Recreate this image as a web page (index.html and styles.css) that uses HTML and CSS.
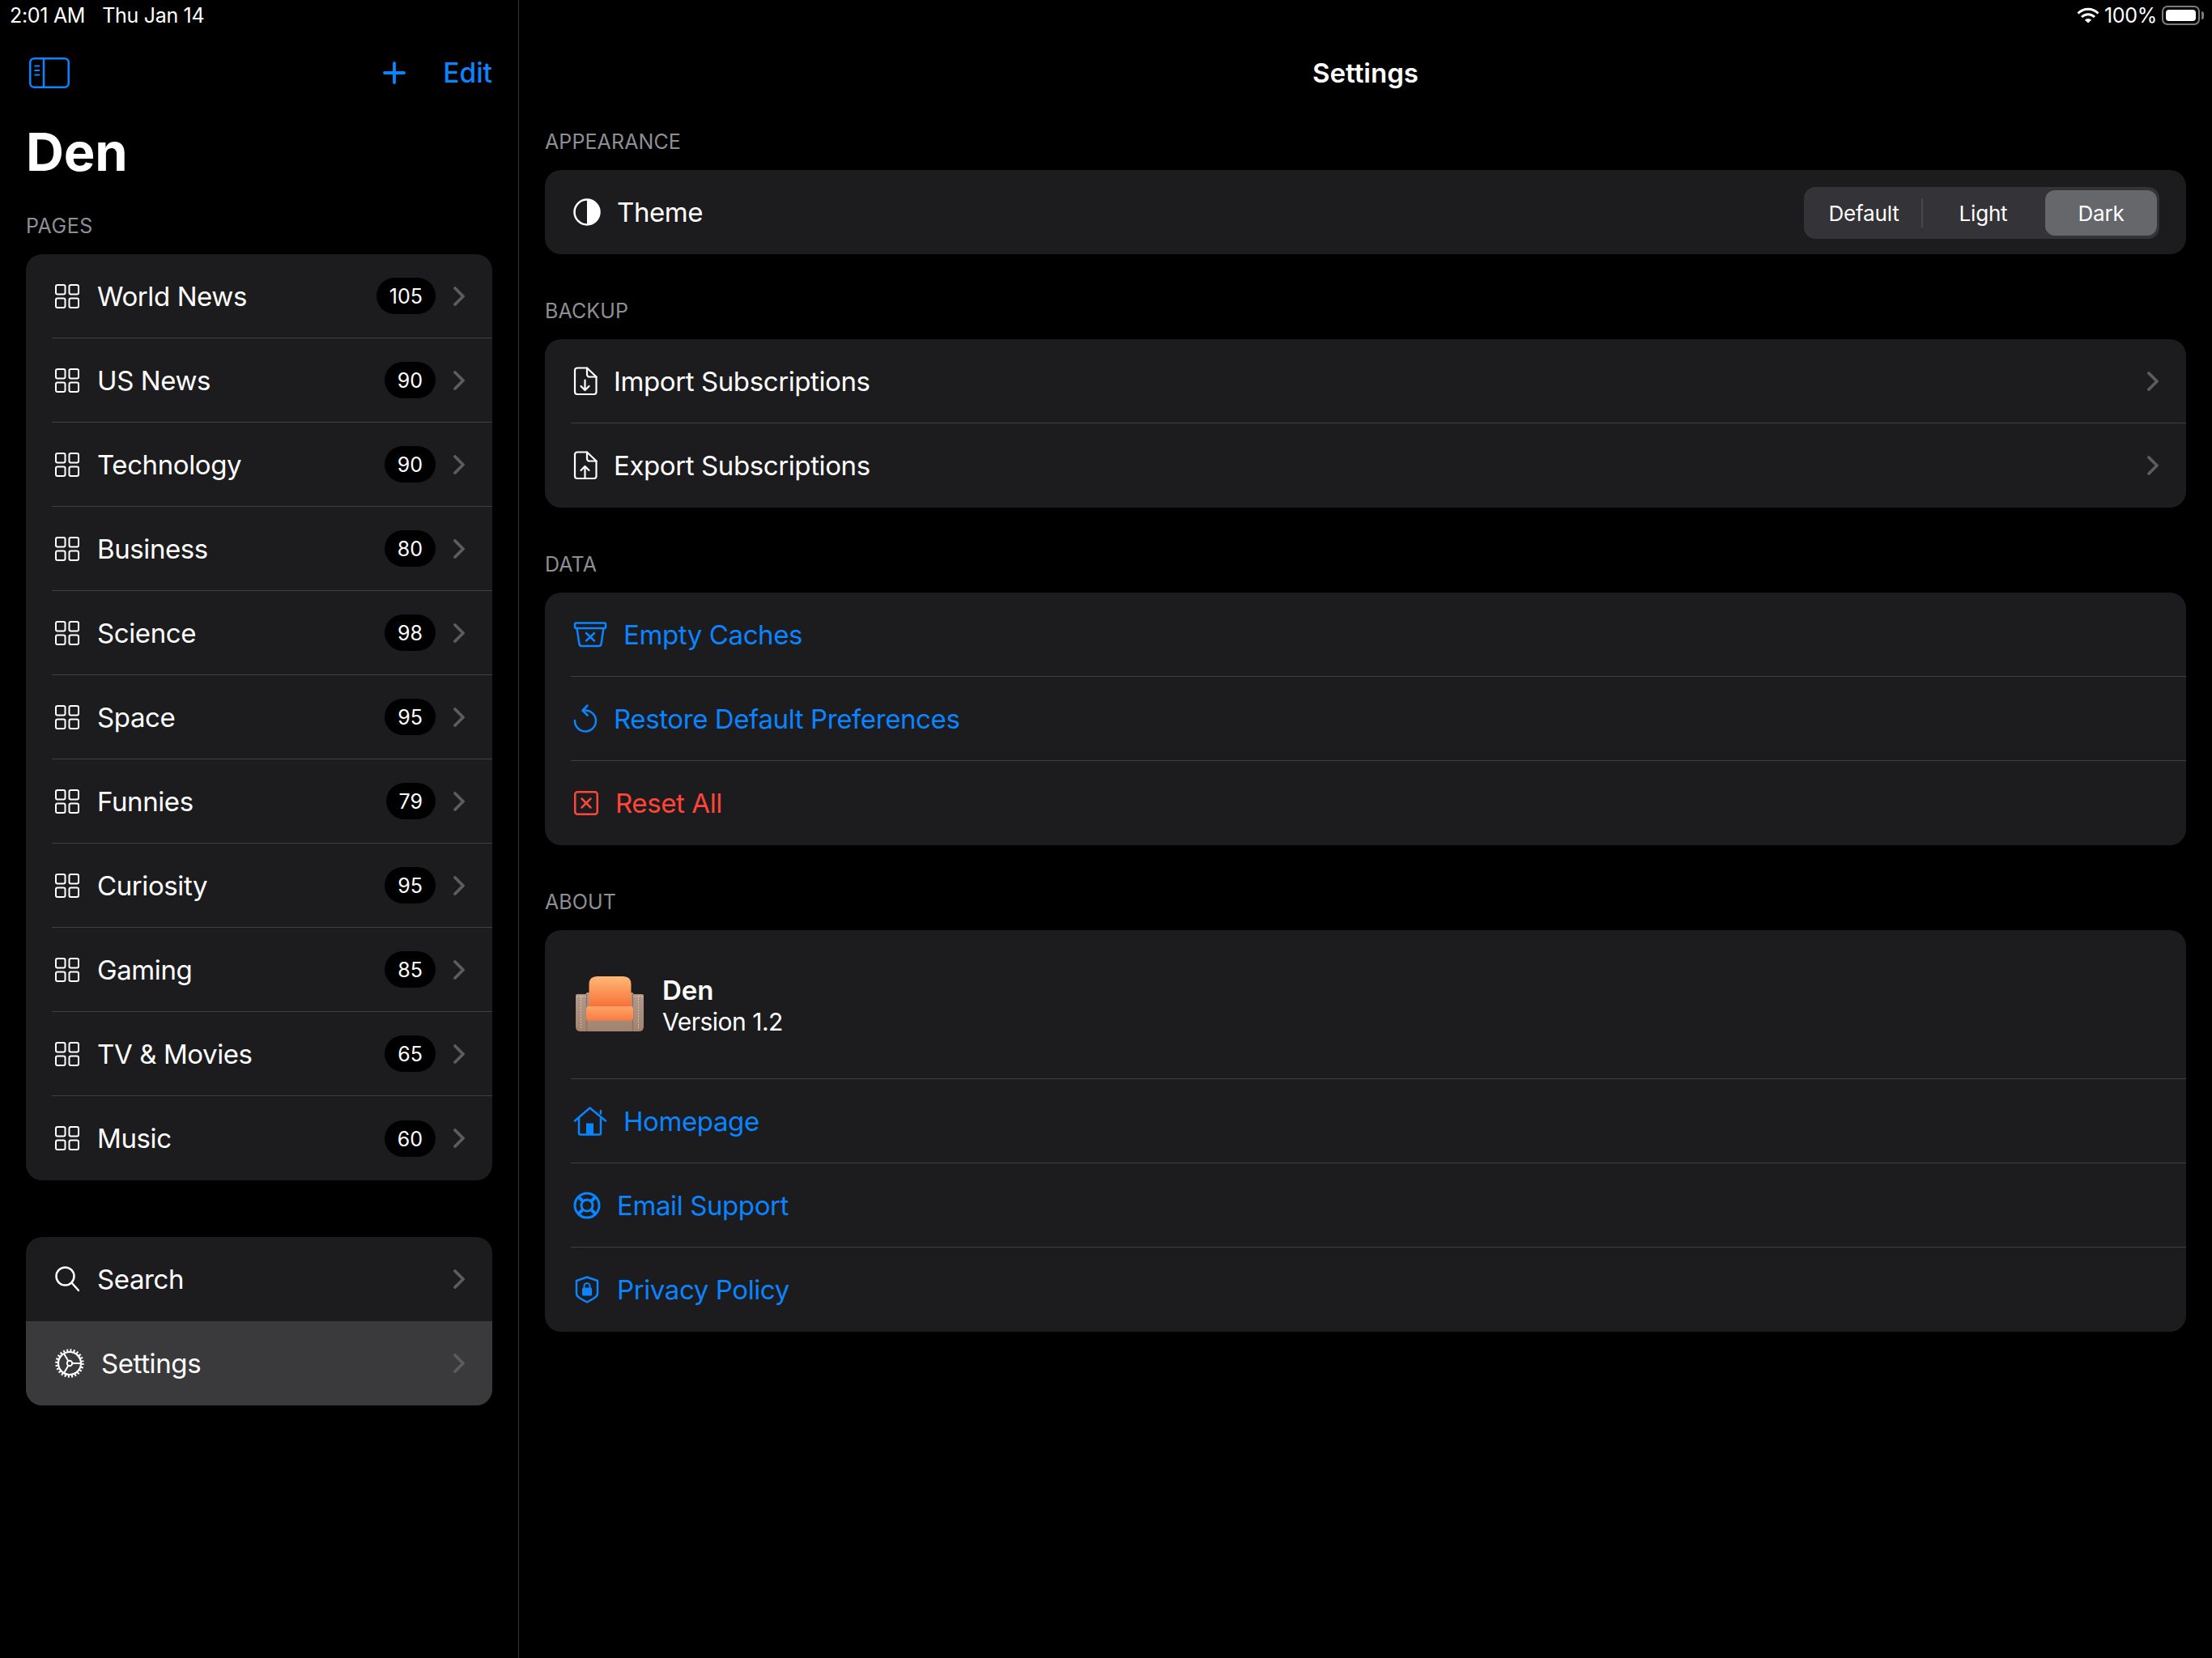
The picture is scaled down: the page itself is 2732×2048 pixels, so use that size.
FILE: index.html
```html
<!DOCTYPE html>
<html lang="en">
<head>
    <meta charset="UTF-8">
    <title>Den Settings</title>
    <link rel="stylesheet" href="styles.css">
</head>
<body>

    <!-- Shared icons -->
    <svg class="icon-defs" width="0" height="0">
        <symbol id="grid" viewBox="0 0 30 30">
            <g fill="none" stroke="currentColor" stroke-width="2">
                <rect x="1" y="1" width="11.5" height="11.5" rx="2"/>
                <rect x="17.5" y="1" width="11.5" height="11.5" rx="2"/>
                <rect x="1" y="17.5" width="11.5" height="11.5" rx="2"/>
                <rect x="17.5" y="17.5" width="11.5" height="11.5" rx="2"/>
            </g>
        </symbol>
        <symbol id="chevron" viewBox="0 0 14 24">
            <path d="M2 2l10 10L2 22" fill="none" stroke="currentColor" stroke-width="3.800" stroke-linecap="round" stroke-linejoin="round"/>
        </symbol>
    </svg>

    <div class="app">
        <aside class="sidebar">
            <div class="status">
                <span>2:01 AM</span>
                <span>Thu Jan 14</span>
            </div>

            <div class="toolbar">
                <svg class="blue" width="50" height="38" viewBox="0 0 50 38" fill="none" stroke="currentColor">
                    <rect x="1.25" y="1.25" width="47.5" height="35.5" rx="5" stroke-width="2.5"/>
                    <path d="M18 1v36" stroke-width="2.5"/>
                    <path d="M6.5 10.5h6.5M6.5 16h6.5M6.5 21.5h6.5" stroke-width="2"/>
                </svg>
                <div class="toolbar-actions">
                    <svg class="blue" width="28" height="28" viewBox="0 0 28 28" fill="none" stroke="currentColor" stroke-width="3.8" stroke-linecap="round">
                        <path d="M14 2v24M2 14h24"/>
                    </svg>
                    <span class="edit">Edit</span>
                </div>
            </div>

            <h1 class="title">Den</h1>
            <div class="section-label sidebar-label">PAGES</div>

            <div class="card">
                <div class="row"><svg class="row-icon"><use href="#grid"/></svg><span class="row-text">World News</span><span class="badge">105</span><svg class="chevron"><use href="#chevron"/></svg></div>
                <div class="row"><svg class="row-icon"><use href="#grid"/></svg><span class="row-text">US News</span><span class="badge">90</span><svg class="chevron"><use href="#chevron"/></svg></div>
                <div class="row"><svg class="row-icon"><use href="#grid"/></svg><span class="row-text">Technology</span><span class="badge">90</span><svg class="chevron"><use href="#chevron"/></svg></div>
                <div class="row"><svg class="row-icon"><use href="#grid"/></svg><span class="row-text">Business</span><span class="badge">80</span><svg class="chevron"><use href="#chevron"/></svg></div>
                <div class="row"><svg class="row-icon"><use href="#grid"/></svg><span class="row-text">Science</span><span class="badge">98</span><svg class="chevron"><use href="#chevron"/></svg></div>
                <div class="row"><svg class="row-icon"><use href="#grid"/></svg><span class="row-text">Space</span><span class="badge">95</span><svg class="chevron"><use href="#chevron"/></svg></div>
                <div class="row"><svg class="row-icon"><use href="#grid"/></svg><span class="row-text">Funnies</span><span class="badge">79</span><svg class="chevron"><use href="#chevron"/></svg></div>
                <div class="row"><svg class="row-icon"><use href="#grid"/></svg><span class="row-text">Curiosity</span><span class="badge">95</span><svg class="chevron"><use href="#chevron"/></svg></div>
                <div class="row"><svg class="row-icon"><use href="#grid"/></svg><span class="row-text">Gaming</span><span class="badge">85</span><svg class="chevron"><use href="#chevron"/></svg></div>
                <div class="row"><svg class="row-icon"><use href="#grid"/></svg><span class="row-text">TV &amp; Movies</span><span class="badge">65</span><svg class="chevron"><use href="#chevron"/></svg></div>
                <div class="row"><svg class="row-icon"><use href="#grid"/></svg><span class="row-text">Music</span><span class="badge">60</span><svg class="chevron"><use href="#chevron"/></svg></div>
            </div>

            <div class="card nav-card">
                <div class="row flat">
                    <svg class="row-icon" viewBox="0 0 30 32" fill="none" stroke="currentColor" stroke-width="2.5" stroke-linecap="round">
                        <circle cx="12.5" cy="12.5" r="11"/>
                        <path d="M20.5 20.5L29 30"/>
                    </svg>
                    <span class="row-text">Search</span>
                    <svg class="chevron"><use href="#chevron"/></svg>
                </div>
                <div class="row flat selected">
                    <svg class="gear" width="36" height="36" viewBox="0 0 36 36" fill="none" stroke="currentColor">
                        <circle cx="18" cy="18" r="14" stroke-width="2.2"/>
                        <circle cx="18" cy="18" r="16.2" stroke-width="3" stroke-dasharray="2 2.24"/>
                        <circle cx="18" cy="18" r="3.2" stroke-width="2"/>
                        <path d="M21.2 18H32M16.4 15.2L11 5.9M16.4 20.8L11 30.1" stroke-width="2"/>
                    </svg>
                    <span class="row-text">Settings</span>
                    <svg class="chevron"><use href="#chevron"/></svg>
                </div>
            </div>
        </aside>

        <main class="main">
            <div class="status status-right">
                <svg width="28" height="20" viewBox="0 0 28 20" fill="none" stroke="#fff" stroke-width="3">
                    <path d="M1.5 7.5C8.5 .5 19.5 .5 26.5 7.5"/>
                    <path d="M6 12C10.5 7.5 17.5 7.5 22 12"/>
                    <path d="M14 19.5L9.8 15.6C12 13.4 16 13.4 18.2 15.6Z" fill="#fff" stroke="none"/>
                </svg>
                <span>100%</span>
                <div class="battery"><div class="battery-level"></div></div>
            </div>

            <div class="main-header">Settings</div>

            <section class="section section-first">
                <div class="section-label">APPEARANCE</div>
                <div class="card panel">
                    <div class="row panel-row">
                        <svg class="line-icon" width="34" height="34" viewBox="0 0 34 34">
                            <circle cx="17" cy="17" r="15.5" fill="none" stroke="currentColor" stroke-width="2.5"/>
                            <path d="M17 1.5a15.5 15.5 0 0 1 0 31z" fill="currentColor"/>
                        </svg>
                        <span class="row-text">Theme</span>
                        <div class="segments">
                            <span class="segment seg-default">Default</span>
                            <span class="segment seg-light">Light</span>
                            <span class="segment seg-dark">Dark</span>
                        </div>
                    </div>
                </div>
            </section>

            <section class="section">
                <div class="section-label">BACKUP</div>
                <div class="card panel">
                    <div class="row panel-row">
                        <svg class="line-icon" width="30" height="36" viewBox="0 0 30 36" fill="none" stroke="currentColor" stroke-width="2.2" stroke-linejoin="round" stroke-linecap="round">
                            <path d="M5 1.5h12L28.5 12.5V31a3 3 0 0 1-3 3H5a3 3 0 0 1-3-3V4.500a3 3 0 0 1 3-3z"/>
                            <path d="M17 1.500V9.500a3 3 0 0 0 3 3h8.500"/>
                            <path d="M14.500 16.500V29M9.500 24l5 5 5-5"/>
                        </svg>
                        <span class="row-text">Import Subscriptions</span>
                        <svg class="chevron"><use href="#chevron"/></svg>
                    </div>
                    <div class="row panel-row">
                        <svg class="line-icon" width="30" height="36" viewBox="0 0 30 36" fill="none" stroke="currentColor" stroke-width="2.2" stroke-linejoin="round" stroke-linecap="round">
                            <path d="M5 1.5h12L28.5 12.5V31a3 3 0 0 1-3 3H5a3 3 0 0 1-3-3V4.500a3 3 0 0 1 3-3z"/>
                            <path d="M17 1.500V9.500a3 3 0 0 0 3 3h8.500"/>
                            <path d="M14.500 33V19M9.500 24l5-5 5 5"/>
                        </svg>
                        <span class="row-text">Export Subscriptions</span>
                        <svg class="chevron"><use href="#chevron"/></svg>
                    </div>
                </div>
            </section>

            <section class="section">
                <div class="section-label">DATA</div>
                <div class="card panel">
                    <div class="row panel-row blue">
                        <svg class="line-icon" width="42" height="32" viewBox="0 0 42 32" fill="none" stroke="currentColor" stroke-width="2.500" stroke-linejoin="round" stroke-linecap="round">
                            <rect x="2" y="1.500" width="38" height="6.500" rx="1.500"/>
                            <path d="M4.500 8l3 19.500a3 3 0 0 0 3 2.500h21a3 3 0 0 0 3-2.500l3-19.500"/>
                            <path d="M16 14l10 9.500M26 14l-10 9.500"/>
                        </svg>
                        <span class="row-text">Empty Caches</span>
                    </div>
                    <div class="row panel-row blue">
                        <svg class="line-icon" width="30" height="36" viewBox="0 0 30 36" fill="none" stroke="currentColor" stroke-width="2.500" stroke-linecap="round" stroke-linejoin="round">
                            <path d="M14.500 7.500A13 13 0 1 1 2 20"/>
                            <path d="M17.500 1.500L11.500 7.500l6 6"/>
                        </svg>
                        <span class="row-text">Restore Default Preferences</span>
                    </div>
                    <div class="row panel-row red">
                        <svg class="line-icon" width="32" height="32" viewBox="0 0 32 32" fill="none" stroke="currentColor" stroke-width="2.500" stroke-linecap="round">
                            <rect x="2.250" y="2.250" width="27.500" height="27.500" rx="3"/>
                            <path d="M10.500 10.500l11 11M21.500 10.500l-11 11"/>
                        </svg>
                        <span class="row-text">Reset All</span>
                    </div>
                </div>
            </section>

            <section class="section">
                <div class="section-label">ABOUT</div>
                <div class="card panel">
                    <div class="row panel-row app-row">
                        <svg class="chair" width="84" height="69" viewBox="0 0 84 69">
                            <defs>
                                <linearGradient id="chair-body" x1="0" y1="0" x2="0" y2="1">
                                    <stop offset="0" stop-color="#b49a8b"/>
                                    <stop offset="1" stop-color="#a2836f"/>
                                </linearGradient>
                                <linearGradient id="chair-back" x1="0" y1="0" x2="0" y2="1">
                                    <stop offset="0" stop-color="#ffb877"/>
                                    <stop offset="1" stop-color="#f86f38"/>
                                </linearGradient>
                                <linearGradient id="chair-seat" x1="0" y1="0" x2="0" y2="1">
                                    <stop offset="0" stop-color="#ffa468"/>
                                    <stop offset="1" stop-color="#f97c42"/>
                                </linearGradient>
                            </defs>
                            <path d="M0 24q0-2 2-2h10l2-2h56l2 2h10q2 0 2 2v38q0 6-6 6H6q-6 0-6-6z" fill="url(#chair-body)"/>
                            <path d="M13.500 22v46M70.500 22v46" stroke="#8f7261" stroke-width="1.500"/>
                            <path d="M6.500 24v40M77.500 24v40M1 25h12M71 25h12" stroke="#e8ded8" stroke-width=".8" stroke-dasharray="1.500 2"/>
                            <path d="M16.500 10q0-10 10-10h32q10 0 10 10v28h-52z" fill="url(#chair-back)"/>
                            <rect x="13" y="37" width="58" height="17.500" rx="3" fill="url(#chair-seat)"/>
                        </svg>
                        <div class="app-info">
                            <span class="app-name">Den</span>
                            <span class="app-version">Version 1.2</span>
                        </div>
                    </div>
                    <div class="row panel-row blue">
                        <svg class="line-icon" width="42" height="36" viewBox="0 0 42 36" fill="none" stroke="currentColor" stroke-width="2.500" stroke-linecap="round" stroke-linejoin="round">
                            <path d="M2 17.500L20.500 1.500 40 17.500"/>
                            <path d="M7 14v18.500a2 2 0 0 0 2 2h23a2 2 0 0 0 2-2V14"/>
                            <path d="M34 8.500V5"/>
                            <rect x="16" y="20.500" width="9" height="14" fill="currentColor" stroke="none"/>
                        </svg>
                        <span class="row-text">Homepage</span>
                    </div>
                    <div class="row panel-row blue">
                        <svg class="line-icon" width="34" height="34" viewBox="0 0 34 34" fill="none" stroke="currentColor" stroke-width="3">
                            <circle cx="17" cy="17" r="15"/>
                            <circle cx="17" cy="17" r="7"/>
                            <path d="M7 7l5 5M27 7l-5 5M7 27l5-5M27 27l-5-5" stroke-width="4"/>
                        </svg>
                        <span class="row-text">Email Support</span>
                    </div>
                    <div class="row panel-row blue">
                        <svg class="line-icon" width="34" height="34" viewBox="0 0 34 34" fill="none" stroke="currentColor" stroke-width="2.500" stroke-linejoin="round">
                            <path d="M17 1.500L30 6v15c0 4-2 5-5 7l-8 4.500L9 28c-3-2-5-3-5-7V6z"/>
                            <rect x="11" y="14.500" width="12" height="10" rx="1.500" fill="currentColor" stroke="none"/>
                            <path d="M13.500 15v-2.500a3.500 3.500 0 0 1 7 0V15" stroke-width="2"/>
                        </svg>
                        <span class="row-text">Privacy Policy</span>
                    </div>
                </div>
            </section>
        </main>
    </div>

</body>
</html>
```

FILE: styles.css
```css
* {
    box-sizing: border-box;
}

body {
    margin: 0;
    background: #000;
    color: #fff;
    font-family: Inter, "Liberation Sans", sans-serif;
    font-size: 33px;
}

.icon-defs {
    display: block;
    height: 0;
}

.app {
    display: flex;
    width: 2732px;
    height: 2048px;
    overflow: hidden;
}

.blue {
    color: #0a84ff;
}

.red {
    color: #ff453a;
}

/* Status bar */
.status {
    display: flex;
    align-items: center;
    gap: 21px;
    height: 38px;
    padding-left: 12px;
    font-size: 25px;
    letter-spacing: -0.3px;
}

.status-right {
    justify-content: flex-end;
    gap: 6px;
    margin-right: -32px;
    padding-left: 0;
    padding-right: 15px;
}

.battery {
    position: relative;
    width: 47px;
    height: 24px;
    padding: 3px;
    border: 2px solid #7c7c7e;
    border-radius: 7px;
}

.battery-level {
    height: 100%;
    background: #fff;
    border-radius: 4px;
}

.battery::after {
    content: "";
    position: absolute;
    top: 5px;
    right: -7px;
    width: 3px;
    height: 10px;
    background: #7c7c7e;
    border-radius: 0 3px 3px 0;
}

/* Sidebar */
.sidebar {
    flex: none;
    width: 641px;
    padding-right: 32px;
    border-right: 1px solid #38383a;
}

.toolbar {
    display: flex;
    align-items: center;
    justify-content: space-between;
    height: 104px;
    margin-left: 36px;
}

.toolbar-actions {
    display: flex;
    align-items: center;
    gap: 46px;
    color: #0a84ff;
}

.edit {
    font-size: 33.5px;
    font-weight: 500;
}

.title {
    height: 84px;
    margin: 4px 0 0 32px;
    font-size: 65px;
    font-weight: 700;
    line-height: 84px;
    letter-spacing: -0.2px;
}

.section-label {
    height: 30px;
    color: #8e8e93;
    font-size: 25px;
    line-height: 30px;
    letter-spacing: 0.1px;
}

.sidebar-label {
    margin: 34px 0 20px 32px;
    letter-spacing: 0.5px;
}

.card {
    background: #1c1c1e;
    border-radius: 20px;
    overflow: hidden;
}

.sidebar .card {
    margin-left: 32px;
}

.nav-card {
    margin-top: 70px;
}

/* Rows */
.row {
    display: flex;
    align-items: center;
    height: 104px;
    margin-left: 32px;
    padding: 0 34px 0 4px;
    border-bottom: 1px solid #3f3f41;
}

.row:last-child {
    border-bottom: 0;
}

.row.flat {
    margin-left: 0;
    padding-left: 36px;
    border-bottom: 0;
}

.row.selected {
    background: #3a3a3c;
}

.row-icon {
    flex: none;
    width: 30px;
    height: 32px;
    margin-right: 22px;
}

.gear {
    flex: none;
    margin-right: 21px;
}

.row-text {
    flex: 1;
    letter-spacing: -0.4px;
}

.badge {
    height: 45px;
    margin-right: 22px;
    padding: 0 16px;
    background: #000;
    border-radius: 23px;
    font-size: 25px;
    line-height: 47px;
}

.chevron {
    flex: none;
    width: 14px;
    height: 24px;
    color: #5b5b60;
}

/* Main column */
.main {
    flex: 1;
    padding: 0 32px;
}

.main-header {
    display: flex;
    align-items: center;
    justify-content: center;
    height: 104px;
    font-weight: 600;
}

.section .section-label {
    margin: 55px 0 20px;
}

.section-first .section-label {
    margin-top: 18px;
    margin-bottom: 20px;
}

.panel-row {
    padding-left: 3px;
}

.line-icon {
    flex: none;
    margin-right: 20px;
}

.segments {
    position: relative;
    display: flex;
    align-items: center;
    width: 439px;
    height: 64px;
    margin: 2px -1px 0 0;
    padding: 4px 3px;
    background: #333338;
    border-radius: 14px;
    font-size: 26px;
    letter-spacing: -0.2px;
}

.segment {
    display: flex;
    align-items: center;
    justify-content: center;
    height: 56px;
}

.seg-default {
    width: 142px;
}

.seg-light {
    width: 153px;
}

.seg-dark {
    width: 138px;
    background: #66676b;
    border-radius: 12px;
}

.seg-default::after {
    content: "";
    position: absolute;
    top: 14px;
    left: 145px;
    width: 2px;
    height: 36px;
    background: #48484c;
}

.app-row {
    height: 184px;
}

.chair {
    flex: none;
    margin: 0 23px 0 3px;
}

.app-info {
    display: flex;
    flex-direction: column;
    margin-top: 3px;
}

.app-name {
    font-weight: 600;
    line-height: 40px;
}

.app-version {
    font-size: 30px;
    line-height: 38px;
    letter-spacing: -0.5px;
}
```
